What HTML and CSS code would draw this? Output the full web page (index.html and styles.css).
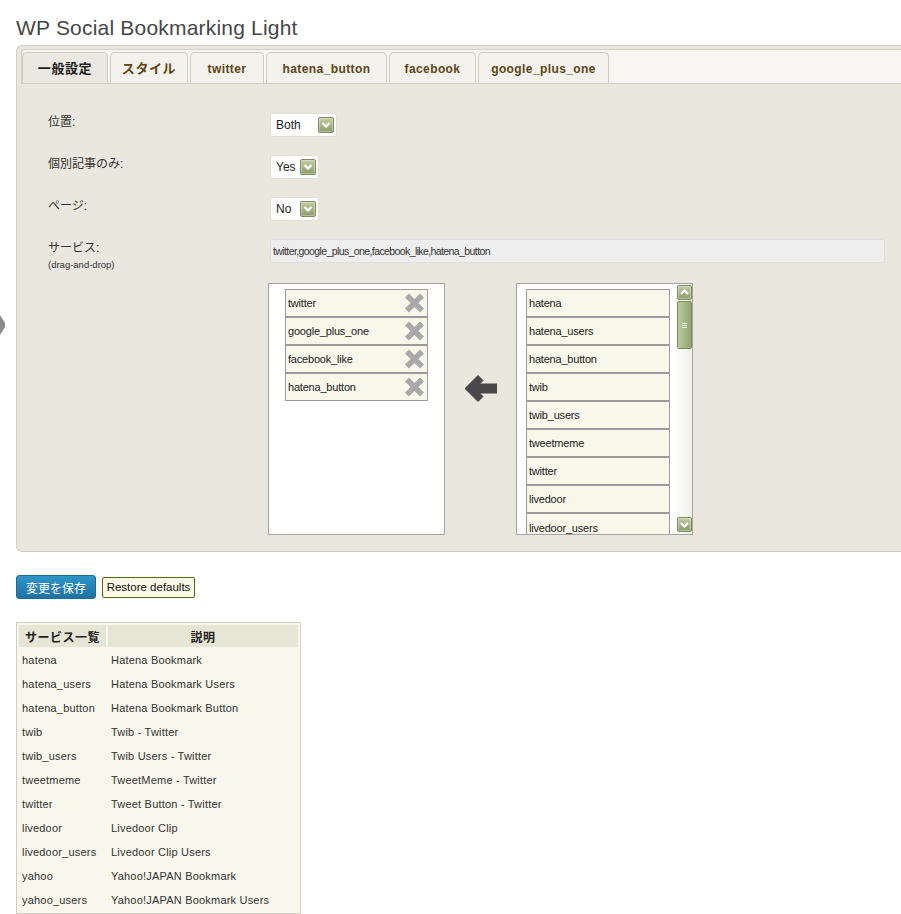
FILE: index.html
```html
<!DOCTYPE html>
<html lang="ja">
<head>
<meta charset="utf-8">
<title>WP Social Bookmarking Light</title>
<link rel="stylesheet" href="styles.css">
</head>
<body>
<div class="edge-arrow"><svg width="6" height="20" viewBox="0 0 6 20"><polygon points="0,0 5,8 5,12 0,20" fill="#8a8a8a"/></svg></div>
<div class="wrap">
  <h2 class="title">WP Social Bookmarking Light</h2>
  <div class="panel">
    <div class="tabbar">
      <div class="tab tab-active tab-w1 tab-jp">一般設定</div>
      <div class="tab tab-w2 tab-jp">スタイル</div>
      <div class="tab tab-w3">twitter</div>
      <div class="tab tab-w4">hatena_button</div>
      <div class="tab tab-w5">facebook</div>
      <div class="tab tab-w6">google_plus_one</div>
    </div>
    <div class="panel-body">
      <div class="row">
        <div class="label">位置:</div>
        <div class="control">
          <div class="select select-wide"><span class="select-text">Both</span><span class="dd-btn"><svg width="14" height="14" viewBox="0 0 14 14"><path d="M3.5 5 L7 8.5 L10.5 5" fill="none" stroke="#fff" stroke-width="2.2"/></svg></span></div>
        </div>
      </div>
      <div class="row">
        <div class="label">個別記事のみ:</div>
        <div class="control">
          <div class="select"><span class="select-text">Yes</span><span class="dd-btn"><svg width="14" height="14" viewBox="0 0 14 14"><path d="M3.5 5 L7 8.5 L10.5 5" fill="none" stroke="#fff" stroke-width="2.2"/></svg></span></div>
        </div>
      </div>
      <div class="row">
        <div class="label">ページ:</div>
        <div class="control">
          <div class="select"><span class="select-text">No</span><span class="dd-btn"><svg width="14" height="14" viewBox="0 0 14 14"><path d="M3.5 5 L7 8.5 L10.5 5" fill="none" stroke="#fff" stroke-width="2.2"/></svg></span></div>
        </div>
      </div>
      <div class="row row-services">
        <div class="label">サービス:<div class="hint">(drag-and-drop)</div></div>
        <div class="control">
          <div class="textinput">twitter,google_plus_one,facebook_like,hatena_button</div>
          <div class="lists">
            <div class="listbox listbox-selected">
              <div class="item"><span>twitter</span><svg class="x-icon" width="21" height="20" viewBox="0 0 21 20"><path d="M3 2.5 L18 17.5 M18 2.5 L3 17.5" stroke="#a9a9a9" stroke-width="5.5"/></svg></div>
              <div class="item"><span>google_plus_one</span><svg class="x-icon" width="21" height="20" viewBox="0 0 21 20"><path d="M3 2.5 L18 17.5 M18 2.5 L3 17.5" stroke="#a9a9a9" stroke-width="5.5"/></svg></div>
              <div class="item"><span>facebook_like</span><svg class="x-icon" width="21" height="20" viewBox="0 0 21 20"><path d="M3 2.5 L18 17.5 M18 2.5 L3 17.5" stroke="#a9a9a9" stroke-width="5.5"/></svg></div>
              <div class="item"><span>hatena_button</span><svg class="x-icon" width="21" height="20" viewBox="0 0 21 20"><path d="M3 2.5 L18 17.5 M18 2.5 L3 17.5" stroke="#a9a9a9" stroke-width="5.5"/></svg></div>
            </div>
            <div class="arrow"><svg width="32" height="31" viewBox="0 0 32 31"><polygon points="0,15.5 13,2.5 18,7.5 14.5,11 32,11 32,20 14.5,20 18,23.5 13,28.5" fill="#484848" stroke="#484848" stroke-width="1" stroke-linejoin="round"/></svg></div>
            <div class="listbox listbox-available">
              <div class="list-scroll">
                <div class="item item-wide"><span>hatena</span></div>
                <div class="item item-wide"><span>hatena_users</span></div>
                <div class="item item-wide"><span>hatena_button</span></div>
                <div class="item item-wide"><span>twib</span></div>
                <div class="item item-wide"><span>twib_users</span></div>
                <div class="item item-wide"><span>tweetmeme</span></div>
                <div class="item item-wide"><span>twitter</span></div>
                <div class="item item-wide"><span>livedoor</span></div>
                <div class="item item-wide item-cut"><span>livedoor_users</span></div>
              </div>
              <div class="scrollbar">
                <span class="sb-btn"><svg width="13" height="13" viewBox="0 0 13 13"><path d="M3 8 L6.5 4.5 L10 8" fill="none" stroke="#fff" stroke-width="2.2"/></svg></span>
                <span class="sb-thumb"><span class="grip"></span><span class="grip"></span><span class="grip"></span></span>
                <span class="sb-track"></span>
                <span class="sb-btn"><svg width="13" height="13" viewBox="0 0 13 13"><path d="M3 5 L6.5 8.5 L10 5" fill="none" stroke="#fff" stroke-width="2.2"/></svg></span>
              </div>
            </div>
          </div>
        </div>
      </div>
    </div>
  </div>
  <div class="actions">
    <button class="btn-primary" type="button">変更を保存</button>
    <button class="btn-secondary" type="button">Restore defaults</button>
  </div>
  <table class="services">
    <thead>
      <tr><th class="col-name">サービス一覧</th><th class="col-desc">説明</th></tr>
    </thead>
    <tbody>
      <tr><td>hatena</td><td>Hatena Bookmark</td></tr>
      <tr><td>hatena_users</td><td>Hatena Bookmark Users</td></tr>
      <tr><td>hatena_button</td><td>Hatena Bookmark Button</td></tr>
      <tr><td>twib</td><td>Twib - Twitter</td></tr>
      <tr><td>twib_users</td><td>Twib Users - Twitter</td></tr>
      <tr><td>tweetmeme</td><td>TweetMeme - Twitter</td></tr>
      <tr><td>twitter</td><td>Tweet Button - Twitter</td></tr>
      <tr><td>livedoor</td><td>Livedoor Clip</td></tr>
      <tr><td>livedoor_users</td><td>Livedoor Clip Users</td></tr>
      <tr><td>yahoo</td><td>Yahoo!JAPAN Bookmark</td></tr>
      <tr><td>yahoo_users</td><td>Yahoo!JAPAN Bookmark Users</td></tr>
    </tbody>
  </table>
</div>
</body>
</html>
```
FILE: styles.css
```css
html, body {
  margin: 0;
  padding: 0;
  overflow: hidden;
  background: #fff;
}
body {
  font-family: "Liberation Sans", "Noto Sans CJK JP", sans-serif;
  color: #333;
  position: relative;
}
.edge-arrow {
  position: absolute;
  left: 0;
  top: 315px;
  width: 6px;
  height: 20px;
}
.edge-arrow svg { display: block; }
.wrap {
  margin-left: 16px;
}
.title {
  margin: 13px 0 3px;
  font-size: 21px;
  line-height: 29px;
  font-weight: normal;
  color: #464646;
  letter-spacing: 0.2px;
}
.panel {
  width: 910px;
  box-sizing: border-box;
  border: 1px solid #d3d0c2;
  border-right: none;
  border-radius: 6px 0 0 6px;
  background: #e9e7de;
  padding: 3px 0 0 4px;
}
.tabbar {
  display: flex;
  gap: 2px;
  height: 35px;
  box-sizing: border-box;
  border: 1px solid #d3d0c2;
  border-right: none;
  border-radius: 4px 0 0 0;
  background: #f7f6f2;
  padding: 2px 0 0 0;
}
.tab {
  height: 31px;
  box-sizing: border-box;
  border: 1px solid #cfcbbb;
  border-bottom: none;
  border-radius: 5px 5px 0 0;
  background: #f3f2ed;
  color: #5e4416;
  font-size: 12px;
  font-weight: bold;
  letter-spacing: 0.4px;
  line-height: 32px;
  text-align: center;
  white-space: nowrap;
}
.tab-jp {
  font-size: 13px;
  letter-spacing: 0.6px;
}
.tab-active {
  background: #eae8e0;
  color: #1e1e1e;
}
.tab-w1 { width: 86px; }
.tab-w2 { width: 78px; }
.tab-w3 { width: 74px; }
.tab-w4 { width: 121px; }
.tab-w5 { width: 87px; }
.tab-w6 { width: 131px; }

.panel-body {
  padding: 29px 0 16px 27px;
}
.row {
  display: flex;
  height: 42px;
}
.row-services {
  height: auto;
}
.label {
  width: 222px;
  flex: none;
  font-size: 12px;
  line-height: 16px;
  padding-top: 1px;
  color: #333;
}
.hint {
  font-size: 9.5px;
  line-height: 12px;
  margin-top: 3px;
}
.control {
  flex: 1;
}
.select {
  display: inline-flex;
  align-items: center;
  height: 24px;
  box-sizing: border-box;
  background: #fff;
  border: 1px solid #e1dfd6;
  border-radius: 3px;
  padding: 0 2px 0 5px;
}
.select-text {
  width: 24px;
  font-size: 12px;
  color: #222;
}
.select-wide .select-text {
  width: 42px;
}
.dd-btn, .sb-btn {
  display: flex;
  align-items: center;
  justify-content: center;
  width: 16px;
  height: 16px;
  box-sizing: border-box;
  border: 1px solid #7c8c5c;
  border-radius: 2px;
  background: linear-gradient(#c0cda4, #8c9d6a);
  box-shadow: inset 0 0 0 1px rgba(255,255,255,0.35);
}
.textinput {
  width: 615px;
  height: 24px;
  box-sizing: border-box;
  background: #eee;
  border: 1px solid #dedede;
  border-radius: 3px;
  padding-left: 2px;
  font-size: 10.5px;
  letter-spacing: -0.6px;
  line-height: 22px;
  color: #333;
}
.lists {
  display: flex;
  align-items: flex-start;
  margin-top: 20px;
  margin-left: -2px;
}
.listbox {
  width: 177px;
  height: 252px;
  box-sizing: border-box;
  border: 1px solid #a4a4a4;
  background: #fff;
}
.listbox-selected {
  padding: 5px 0 0 16px;
}
.listbox-available {
  display: flex;
}
.list-scroll {
  width: 159px;
  height: 250px;
  box-sizing: border-box;
  overflow: hidden;
  padding: 5px 0 0 8px;
}
.item {
  width: 143px;
  height: 28px;
  box-sizing: border-box;
  border: 1px solid #9b9b9b;
  background: #f7f7ea;
  display: flex;
  align-items: center;
  justify-content: space-between;
  padding: 0 2px;
  font-size: 11px;
  letter-spacing: -0.2px;
  color: #222;
  flex: none;
}
.item-wide {
  width: 144px;
  margin-left: 1px;
}
.item-cut {
  height: 22px;
  align-items: flex-end;
  border-bottom: none;
  padding-bottom: 1px;
}
.x-icon {
  display: block;
}
.arrow {
  width: 32px;
  height: 31px;
  margin: 90px 19px 0 20px;
}
.arrow svg { display: block; }
.scrollbar {
  width: 16px;
  height: 250px;
  box-sizing: border-box;
  padding: 1px 0 2px 1px;
  display: flex;
  flex-direction: column;
  background: linear-gradient(to right, #fdfdfb, #efefe9);
}
.sb-btn {
  width: 15px;
  height: 15px;
  flex: none;
}
.sb-thumb {
  width: 15px;
  height: 48px;
  margin-top: 1px;
  box-sizing: border-box;
  border: 1px solid #7c8c5c;
  border-radius: 2px;
  background: linear-gradient(to right, #bccaa0, #93a472);
  display: flex;
  flex-direction: column;
  align-items: center;
  justify-content: center;
  gap: 1px;
}
.grip {
  width: 5px;
  height: 1px;
  background: #e3ead4;
}
.sb-track {
  flex: 1;
}
.actions {
  display: flex;
  align-items: center;
  gap: 6px;
  margin-top: 23px;
}
.btn-primary {
  width: 80px;
  height: 24px;
  box-sizing: border-box;
  border: 1px solid #1f6a92;
  border-radius: 3px;
  background: linear-gradient(#2e95c8, #1f72a3);
  color: #fff;
  font: 12px "Liberation Sans", "Noto Sans CJK JP", sans-serif;
  padding: 0;
}
.btn-secondary {
  width: 93px;
  height: 21px;
  box-sizing: border-box;
  border: 1px solid #4f6a14;
  border-radius: 2px;
  background: #f8f8e4;
  color: #111;
  font: 11.5px "Liberation Sans", "Noto Sans CJK JP", sans-serif;
  padding: 0;
}
.services {
  margin-top: 23px;
  width: 285px;
  table-layout: fixed;
  border: 1px solid #cfcfc4;
  border-spacing: 2px;
  background: #f7f7eb;
}
.services th {
  height: 22px;
  padding: 0;
  background: #e6e6d6;
  font-size: 12px;
  font-weight: bold;
  letter-spacing: 0.5px;
  color: #222;
  text-align: center;
  box-sizing: border-box;
}
.services .col-name { width: 87px; }
.services .col-desc { width: 190px; }
.services td {
  height: 22px;
  padding: 0 2px 0 3px;
  font-size: 11px;
  letter-spacing: 0.2px;
  color: #333;
  white-space: nowrap;
  box-sizing: border-box;
}
```
